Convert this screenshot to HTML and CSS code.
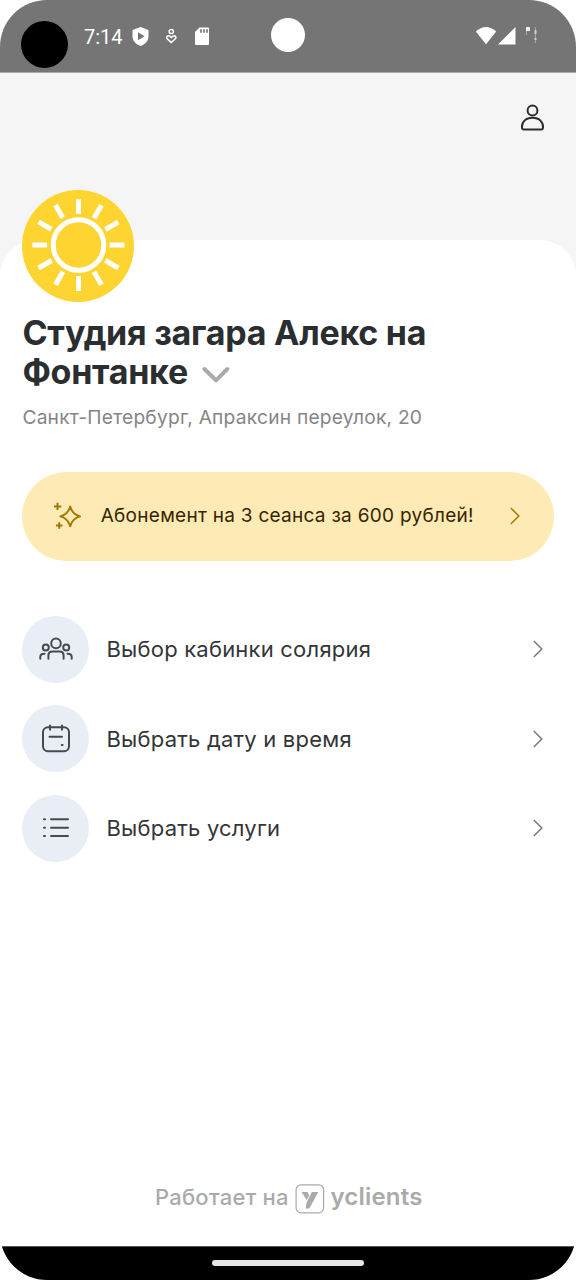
FILE: index.html
```html
<!DOCTYPE html>
<html lang="ru">
<head>
<meta charset="utf-8">
<title>Студия загара Алекс на Фонтанке</title>
<link rel="stylesheet" href="styles.css">
</head>
<body>
<div class="screen">
  <header class="status">
    <span class="lens"></span>
    <span class="clock">7:14</span>
    <svg class="status-left" width="80" height="22" viewBox="0 0 80 22">
      <path d="M8.500 1L16.500 4V10C16.500 15 13 18.500 8.500 20C4 18.500.5 15 .5 10V4Z" fill="#fff"/>
      <path d="M6 6.300V14.300L12.500 10.300Z" fill="#757575"/>
      <g fill="none" stroke="#fff" stroke-width="1.500"><circle cx="39.300" cy="5.500" r="2.100"/><path d="M39.300 16.600L35 12.600C33.800 11 35.900 9 37.600 10.200L39.300 11.600L41 10.200C42.700 9 44.800 11 43.600 12.600Z"/></g>
      <path d="M67.500 1.500H76Q77 1.500 77 2.500V18Q77 19 76 19H64Q63 19 63 18V6Z" fill="#fff"/>
      <path d="M69 3.200V6.700M72 3.200V6.700M75 3.200V6.700" stroke="#757575" stroke-width="1.700"/>
    </svg>
    <span class="camera"></span>
    <svg class="status-right" width="64" height="20" viewBox="0 0 64 20">
      <path d="M.8 5.500Q11 -3.500 21.200 5.500L11 18.300Z" fill="#fff"/>
      <path d="M40.500 1V18.500H23Z" fill="#fff"/>
      <path d="M51 1H55V5H51Z" fill="#eee"/><path d="M51.500 5V9M60.400 1V17" stroke="#aaa" stroke-width="1"/><path d="M60.500 4V8M60.500 12V14" stroke="#ccc" stroke-width="2"/>
    </svg>
  </header>
  <div class="cover">
    <svg class="profile" width="26" height="28" viewBox="0 0 26 28" fill="none" stroke="#2b2e30" stroke-width="2"><circle cx="12.500" cy="6.500" r="4.900"/><path d="M2 24C1.200 18.500 5.500 13.800 12.500 13.800S23.800 18.500 23 24Q22.900 25.400 21.500 25.400H3.500Q2.100 25.400 2 24Z"/></svg>
  </div>
  <main class="sheet">
    <svg class="logo" width="112" height="112" viewBox="0 0 112 112">
      <circle cx="56" cy="56" r="56" fill="#fed530"/>
      <g fill="none" stroke="#fff" stroke-width="5"><circle cx="56.500" cy="55" r="25.300"/>
      <path d="M56.500 9.200V24M56.500 86V101M10.400 55H25M87.500 55H102.500"/><path d="M56.500 9.200V24M56.500 86V101M10.400 55H25M87.500 55H102.500" transform="rotate(30 56.500 55)"/><path d="M56.500 9.200V24M56.500 86V101M10.400 55H25M87.500 55H102.500" transform="rotate(60 56.500 55)"/></g>
    </svg>
    <h1 class="title">Студия загара Алекс на<br>Фонтанке<svg class="down" width="28" height="18" viewBox="0 0 28 18" fill="none" stroke="#aaa" stroke-width="4" stroke-linecap="round" stroke-linejoin="round"><path d="M2.500 3L14 14.300L25.300 3"/></svg></h1>
    <p class="address">Санкт-Петербург, Апраксин переулок, 20</p>
    <a class="promo">
      <svg width="28" height="28" viewBox="0 0 28 28" fill="none" stroke="#a37800" stroke-width="2" stroke-linejoin="round"><path d="M16.200 4.500Q18.300 12.300 26 14.400Q18.300 16.500 16.200 24.300Q14.100 16.500 6.400 14.400Q14.100 12.300 16.200 4.500ZM3.500 .8V8M0 4.400H7.300M5.200 20.300V26.800M2 23.500H8.400"/></svg>
      <span class="promo-text">Абонемент на 3 сеанса за 600 рублей!</span>
      <svg class="chevron" width="12" height="20" viewBox="0 0 12 20" fill="none" stroke="#a37800" stroke-width="1.500"><path d="M1.800 2L9.800 10L1.800 18"/></svg>
    </a>
    <nav class="menu">
      <a class="item">
        <span class="bubble"><svg width="36" height="32" viewBox="0 0 36 32" fill="none" stroke="#47494c" stroke-width="2" stroke-linecap="round"><circle cx="18" cy="10.400" r="4.800"/><circle cx="7.800" cy="14.500" r="3"/><circle cx="28.200" cy="14.500" r="3"/><path d="M10.400 25.700V22.500Q10.400 18.400 14.500 18.400H21.500Q25.600 18.400 25.600 22.500V25.700M2.300 25.700V24Q2.300 20.800 6.500 20.800M33.700 25.700V24Q33.700 20.800 29.500 20.800"/></svg></span>
        <span class="label">Выбор кабинки солярия</span>
        <svg class="chevron" width="12" height="20" viewBox="0 0 12 20" fill="none" stroke="#7b7d80" stroke-width="1.600"><path d="M1.800 2L9.800 10L1.800 18"/></svg>
      </a>
      <a class="item">
        <span class="bubble"><svg width="36" height="32" viewBox="0 0 36 32" fill="none" stroke="#47494c" stroke-width="2" stroke-linecap="round"><rect x="5" y="4.300" width="26" height="24" rx="5"/><path d="M12 2.500V6.700M24 2.500V6.700M11.500 13.800H24M23.800 22H24.600"/></svg></span>
        <span class="label">Выбрать дату и время</span>
        <svg class="chevron" width="12" height="20" viewBox="0 0 12 20" fill="none" stroke="#7b7d80" stroke-width="1.600"><path d="M1.800 2L9.800 10L1.800 18"/></svg>
      </a>
      <a class="item">
        <span class="bubble"><svg width="36" height="32" viewBox="0 0 36 32" fill="none" stroke="#47494c" stroke-width="2" stroke-linecap="round"><path d="M13 7.300H30M13 15.700H30M13 24.100H30M6 7.300H7M6 15.700H7M6 24.100H7"/></svg></span>
        <span class="label">Выбрать услуги</span>
        <svg class="chevron" width="12" height="20" viewBox="0 0 12 20" fill="none" stroke="#7b7d80" stroke-width="1.600"><path d="M1.800 2L9.800 10L1.800 18"/></svg>
      </a>
    </nav>
    <footer class="powered">
      <span class="works">Работает на</span>
      <svg class="mark" width="30" height="30" viewBox="0 0 30 30"><rect x="1.100" y=".8" width="27.500" height="28" rx="5" fill="none" stroke="#aaa" stroke-width="1.200"/><path d="M6.500 8H12.400L14.300 11.300L11.700 16ZM16.800 8H23.300L14.300 24.500H10.600L11.600 18.400Z" fill="#aaa"/></svg>
      <span class="brand">yclients</span>
    </footer>
  </main>
  <div class="navbar"><span class="handle"></span></div>
</div>
</body>
</html>
```
FILE: styles.css
```css
* { box-sizing: border-box; }
body { margin: 0; background: #fff; font-family: Inter, Roboto, sans-serif; }
svg { display: block; flex: none; }
.screen { width: 576px; height: 1280px; border-radius: 47px; overflow: hidden; background: #f5f5f5; display: flex; flex-direction: column; }
.status { height: 73px; flex: none; background: #757575; border-bottom: 1px solid #aaa; display: flex; align-items: flex-start; padding-left: 21px; }
.lens { width: 47px; height: 47px; margin-top: 21px; border-radius: 50%; background: #000; }
.clock { width: 39px; margin: 25px 0 0 16px; color: #fff; font: 20px/24px Roboto, sans-serif; white-space: nowrap; }
.status-left { margin: 26px 0 0 9px; }
.camera { width: 34px; height: 34px; margin: 18px 0 0 59px; border-radius: 50%; background: #fff; }
.status-right { margin: 26px 0 0 170px; }
.cover { height: 167.400px; flex: none; padding: 31.300px 30.300px 0 0; display: flex; justify-content: flex-end; align-items: flex-start; }
.sheet { flex: 1; background: #fff; border-radius: 36px 36px 0 0; padding: 0 21.600px 0 22.400px; display: flex; flex-direction: column; }
.logo { margin-top: -50px; }
.title { margin: 10.600px 0 0; color: #2b2e30; font-size: 34px; line-height: 39px; font-weight: 700; letter-spacing: -0.250px; white-space: nowrap; }
.down { display: inline-block; margin-left: 14px; vertical-align: 0; }
.address { margin: 14.300px 0 0; color: #858585; font-size: 19.200px; line-height: 24px; letter-spacing: .220px; white-space: nowrap; }
.promo { height: 89px; margin-top: 42.500px; padding: 0 33px 0 31.600px; border-radius: 45px; background: #feeab4; display: flex; align-items: center; }
.promo-text { flex: 1; margin-left: 18.700px; color: #352500; font-size: 19px; line-height: 24px; letter-spacing: .280px; white-space: nowrap; }
.menu { margin-top: 55px; display: flex; flex-direction: column; gap: 22.500px; }
.item { display: flex; align-items: center; padding-right: 10.500px; }
.bubble { width: 67px; height: 67px; border-radius: 50%; background: #e9edf5; display: flex; align-items: center; justify-content: center; }
.label { flex: 1; margin-left: 17.100px; color: #333537; font-size: 22px; line-height: 30px; letter-spacing: .210px; white-space: nowrap; }
.powered { margin: auto 0 31px; height: 32px; padding-left: 132.500px; display: flex; align-items: center; color: #aaa; }
.works { width: 134px; margin-top: -4px; font-size: 22px; line-height: 30px; font-weight: 500; letter-spacing: .270px; white-space: nowrap; }
.mark { margin-left: 6px; }
.brand { margin: -4px 0 0 5.500px; font: 600 24px/30px Inter, sans-serif; letter-spacing: .200px; white-space: nowrap; }
.navbar { height: 34px; flex: none; background: #000; border-top: 1px solid #555; display: flex; justify-content: center; padding-top: 13px; }
.handle { width: 152px; height: 6px; border-radius: 3px; background: #e6e6e6; }
```
